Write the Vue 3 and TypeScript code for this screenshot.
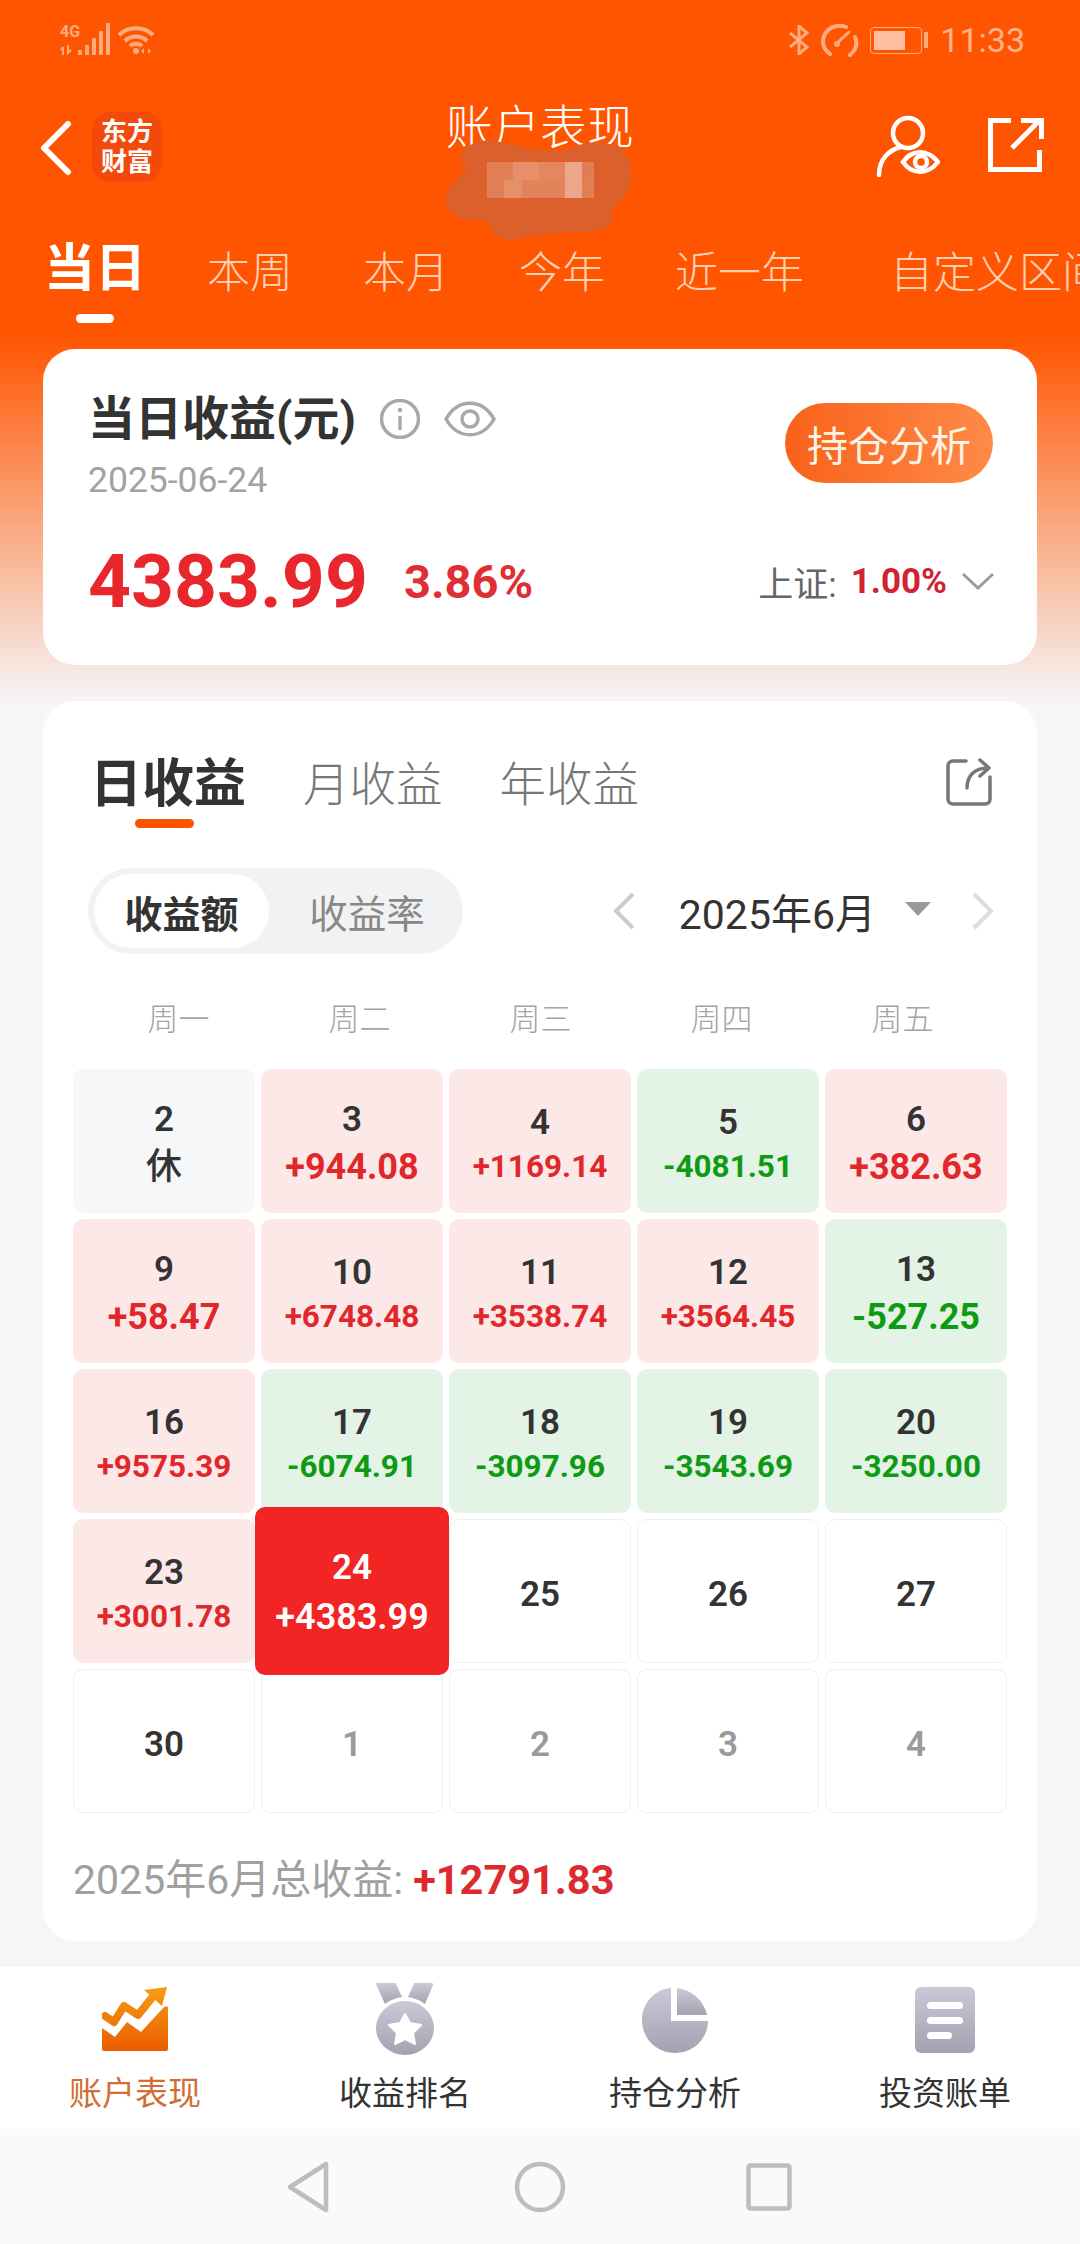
<script setup lang="ts">
type Kind = 'up' | 'down' | 'rest' | 'plain' | 'next' | 'today'
interface Cell {
  day: number
  value?: string
  kind: Kind
}

const rangeTabs = ['本周', '本月', '今年', '近一年']
const weekdays = ['周一', '周二', '周三', '周四', '周五']

const cells: Cell[] = [
  { day: 2, value: '休', kind: 'rest' },
  { day: 3, value: '+944.08', kind: 'up' },
  { day: 4, value: '+1169.14', kind: 'up' },
  { day: 5, value: '-4081.51', kind: 'down' },
  { day: 6, value: '+382.63', kind: 'up' },
  { day: 9, value: '+58.47', kind: 'up' },
  { day: 10, value: '+6748.48', kind: 'up' },
  { day: 11, value: '+3538.74', kind: 'up' },
  { day: 12, value: '+3564.45', kind: 'up' },
  { day: 13, value: '-527.25', kind: 'down' },
  { day: 16, value: '+9575.39', kind: 'up' },
  { day: 17, value: '-6074.91', kind: 'down' },
  { day: 18, value: '-3097.96', kind: 'down' },
  { day: 19, value: '-3543.69', kind: 'down' },
  { day: 20, value: '-3250.00', kind: 'down' },
  { day: 23, value: '+3001.78', kind: 'up' },
  { day: 24, value: '+4383.99', kind: 'today' },
  { day: 25, kind: 'plain' },
  { day: 26, kind: 'plain' },
  { day: 27, kind: 'plain' },
  { day: 30, kind: 'plain' },
  { day: 1, kind: 'next' },
  { day: 2, kind: 'next' },
  { day: 3, kind: 'next' },
  { day: 4, kind: 'next' },
]

// Eight-character amounts are set a little smaller so they stay inside the cell.
function isLong(cell: Cell): boolean {
  return cell.kind !== 'today' && (cell.value?.length ?? 0) >= 8
}

const mosaic = [
  { x: 487, y: 162, w: 26, h: 18, o: 0.2 },
  { x: 513, y: 162, w: 26, h: 18, o: 0.3 },
  { x: 539, y: 162, w: 26, h: 18, o: 0.24 },
  { x: 565, y: 162, w: 17, h: 18, o: 0.45 },
  { x: 582, y: 162, w: 12, h: 18, o: 0.18 },
  { x: 487, y: 180, w: 17, h: 18, o: 0.2 },
  { x: 504, y: 180, w: 18, h: 18, o: 0.3 },
  { x: 522, y: 180, w: 43, h: 18, o: 0.22 },
  { x: 565, y: 180, w: 17, h: 18, o: 0.45 },
  { x: 582, y: 180, w: 12, h: 18, o: 0.2 },
]
</script>

<template>
  <div class="page">
    <div class="status">
      <div class="status-side">
        <svg class="net" width="50" height="34" viewBox="0 0 50 34">
          <text x="0" y="14" class="net-label">4G</text>
          <path d="M3 24v8M1 27l2-3M8 22v8l3-3" class="net-arrow" />
          <rect x="18" y="27" width="4" height="5" rx="1" class="net-fill" />
          <rect x="25" y="22" width="4" height="10" rx="1" class="net-fill" />
          <rect x="32" y="15" width="4" height="17" rx="1" class="net-fill" />
          <rect x="39" y="8" width="4" height="24" rx="1" class="net-fill" />
          <rect x="46" y="0" width="4" height="32" rx="1" class="net-fill" />
        </svg>
        <svg class="wifi" width="38" height="30" viewBox="0 0 38 30">
          <path d="M1 10C10 1 26 1 35 10M7 16c6-6 16-6 22 0M12 21c3-3 9-3 12 0" />
          <circle cx="18" cy="26" r="3" />
          <path d="M26 23v6l-3-3zM30 23v6l3-3z" class="wifi-fill" />
        </svg>
      </div>
      <div class="status-side right">
        <svg class="bt" width="22" height="30" viewBox="0 0 22 30">
          <path d="M2 8l17 14-8 7V1l8 7L2 22" />
        </svg>
        <svg class="gauge" width="38" height="34" viewBox="0 0 38 34">
          <path d="M9 31C2 26 0 18 4 11 8 4 17 1 25 4" />
          <path d="M34 14c3 7 1 13-5 18" />
          <path d="M15 21L28 9" class="gauge-hand" />
          <circle cx="16" cy="21" r="3" class="wifi-fill" />
        </svg>
        <div class="battery">
          <div class="battery-body"><div class="battery-level"></div></div>
          <div class="battery-nub"></div>
        </div>
        <span class="clock">11:33</span>
      </div>
    </div>

    <header class="appbar">
      <div class="appbar-left">
        <svg width="32" height="54" viewBox="0 0 32 54">
          <path d="M28 3L4 27l24 24" class="line-back" />
        </svg>
        <div class="logo"><span>东方</span><span>财富</span></div>
      </div>
      <div class="title">账户表现</div>
      <div class="appbar-right">
        <svg width="64" height="62" viewBox="0 0 64 62">
          <circle cx="32" cy="18" r="15" class="line-thin" />
          <path d="M3 60c0-16 10-25 22-28" class="line-thin" />
          <path d="M27 47c9-13 25-13 35 0-10 13-26 13-35 0z" class="line-thin" />
          <circle cx="45" cy="47" r="6" class="line-thin" />
        </svg>
        <svg width="60" height="60" viewBox="0 0 60 60">
          <path d="M26 5.500H5.500v49h49V35" class="line-box" />
          <path d="M27 33L54 6M36 5.500h20.500V24" class="line-box" />
        </svg>
      </div>
      <svg class="redaction" width="1080" height="260" viewBox="0 0 1080 260">
        <path d="M463 152C470 140 490 138 500 142 520 146 545 152 565 150 585 140 610 140 622 150 634 162 634 180 626 195 618 205 610 208 612 215 614 228 600 232 580 232 555 232 530 236 510 240 500 242 490 228 486 220 470 222 450 218 447 205 444 190 455 178 468 172 462 165 458 158 463 152z" fill="#dc602c" />
        <rect v-for="(m, i) in mosaic" :key="i" :x="m.x" :y="m.y" :width="m.w" :height="m.h" fill="#ffffff" :fill-opacity="m.o" />
      </svg>
    </header>

    <nav class="ranges">
      <div class="range-active">
        <span>当日</span>
        <i></i>
      </div>
      <span v-for="tab in rangeTabs" :key="tab" class="range">{{ tab }}</span>
      <span class="range range-custom">自定义区间</span>
    </nav>

    <section class="card summary">
      <div class="summary-top">
        <div>
          <div class="summary-title">
            <strong>当日收益(元)</strong>
            <svg width="40" height="40" viewBox="0 0 40 40">
              <circle cx="20" cy="20" r="18.5" class="line-grey" />
              <path d="M20 17v14" class="line-grey" />
              <circle cx="20" cy="11" r="2.2" fill="#a8a8a8" />
            </svg>
            <svg width="52" height="40" viewBox="0 0 52 40">
              <path d="M2 20C14 -1 38 -1 50 20 38 41 14 41 2 20z" class="line-grey" />
              <circle cx="26" cy="20" r="8" class="line-grey" />
            </svg>
          </div>
          <div class="summary-date">2025-06-24</div>
        </div>
        <button class="analyse" type="button">持仓分析</button>
      </div>
      <div class="summary-bottom">
        <div class="summary-amount">
          <span class="amount">4383.99</span>
          <span class="rate">3.86%</span>
        </div>
        <div class="index">
          <span class="index-name">上证:</span>
          <span class="index-rate">1.00%</span>
          <svg width="34" height="18" viewBox="0 0 34 18">
            <path d="M2 2l15 14L32 2" class="line-chev" />
          </svg>
        </div>
      </div>
    </section>

    <section class="card calendar">
      <div class="cal-tabs">
        <div class="cal-tab-active">
          <strong>日收益</strong>
          <i></i>
        </div>
        <span class="cal-tab">月收益</span>
        <span class="cal-tab">年收益</span>
        <svg class="cal-share" width="46" height="48" viewBox="0 0 46 48">
          <path d="M20 3H7C4 3 2 5 2 8v33c0 3 2 5 5 5h32c3 0 5-2 5-5V19" class="line-share" />
          <path d="M21 30c0-12 7-20 21-20M34 2l9 8-9 8" class="line-share" />
        </svg>
      </div>

      <div class="cal-controls">
        <div class="segment">
          <span class="segment-on">收益额</span>
          <span class="segment-off">收益率</span>
        </div>
        <div class="month">
          <svg width="24" height="38" viewBox="0 0 24 38">
            <path d="M21 2L4 19l17 17" class="line-prev" />
          </svg>
          <span class="month-label">2025年6月</span>
          <span class="month-caret"></span>
          <svg width="24" height="38" viewBox="0 0 24 38">
            <path d="M3 2l17 17L3 36" class="line-next" />
          </svg>
        </div>
      </div>

      <div class="weekdays">
        <span v-for="day in weekdays" :key="day">{{ day }}</span>
      </div>

      <div class="grid">
        <div v-for="(cell, i) in cells" :key="i" class="cell" :class="cell.kind">
          <span class="cell-day">{{ cell.day }}</span>
          <span v-if="cell.value" class="cell-value" :class="{ long: isLong(cell) }">{{ cell.value }}</span>
        </div>
      </div>

      <div class="total">
        <span class="total-label">2025年6月总收益:</span>
        <strong class="total-value">+12791.83</strong>
      </div>
    </section>

    <div class="spacer"></div>

    <footer class="tabbar">
      <div class="tabbar-item active">
        <svg width="66" height="72" viewBox="0 -3 66 72">
          <defs>
            <linearGradient id="chartFill" gradientUnits="userSpaceOnUse" x1="0" y1="0" x2="0" y2="66">
              <stop offset="0" stop-color="#f6a012" />
              <stop offset="1" stop-color="#ea5a00" />
            </linearGradient>
            <linearGradient id="greyFill" x1="0" y1="0" x2="0" y2="1">
              <stop offset="0" stop-color="#c9c9d8" />
              <stop offset="1" stop-color="#a2a2b0" />
            </linearGradient>
          </defs>
          <path d="M0 42l13 9 12-15 14 10 23-25c2-1 4-1 4 1v41c0 1-1 2-2 2H2c-1 0-2-1-2-2z" fill="url(#chartFill)" />
          <path d="M3 30l9 6 10-16 14 9 17-21" fill="none" stroke="url(#chartFill)" stroke-width="8" stroke-linejoin="round" stroke-linecap="round" />
          <path d="M42 4L65 1 60 20z" fill="url(#chartFill)" />
        </svg>
        <span>账户表现</span>
      </div>
      <div class="tabbar-item">
        <svg width="60" height="72" viewBox="0 0 60 72">
          <path d="M1 1c0-1 1-1 2-1h16c1 0 1 0 2 1l6 13c-6 1-12 3-17 7zM40 0h16c2 0 3 1 2 2l-8 19c-5-4-11-6-17-7l6-13c0-1 0-1 1-1z" fill="url(#greyFill)" />
          <ellipse cx="30" cy="45" rx="29" ry="27" fill="url(#greyFill)" />
          <path d="M30 31l5 9 11 2-8 8 2 11-10-5-10 5 2-11-8-8 11-2z" fill="#fff" stroke="#fff" stroke-width="2" stroke-linejoin="round" />
        </svg>
        <span>收益排名</span>
      </div>
      <div class="tabbar-item">
        <svg width="68" height="72" viewBox="0 -3 68 72">
          <path d="M30 2C14 3 1 17 1 34c0 18 14 33 33 33s33-15 33-32H30z" fill="url(#greyFill)" />
          <path d="M36 2c15 2 27 13 30 27H36z" fill="url(#greyFill)" />
        </svg>
        <span>持仓分析</span>
      </div>
      <div class="tabbar-item">
        <svg width="62" height="72" viewBox="0 -3 62 72">
          <rect x="1" y="1" width="60" height="66" rx="6" fill="url(#greyFill)" />
          <rect x="13" y="16" width="36" height="7" rx="3.5" fill="#fff" />
          <rect x="13" y="31" width="36" height="7" rx="3.5" fill="#fff" />
          <rect x="13" y="46" width="25" height="7" rx="3.5" fill="#fff" />
        </svg>
        <span>投资账单</span>
      </div>
    </footer>

    <div class="sysnav">
      <svg width="42" height="52" viewBox="0 0 42 52">
        <path d="M39 3v46L3 26z" class="line-sys" />
      </svg>
      <svg width="52" height="52" viewBox="0 0 52 52">
        <circle cx="26" cy="26" r="23" class="line-sys" />
      </svg>
      <svg class="sys-recent" width="46" height="48" viewBox="0 0 46 48">
        <rect x="2.5" y="2.5" width="41" height="43" rx="2" class="line-sys" />
      </svg>
    </div>
  </div>
</template>

<style scoped>
.page {
  width: 1080px;
  height: 2244px;
  overflow: hidden;
  display: flex;
  flex-direction: column;
  background: linear-gradient(180deg, #ff5500 0, #ff5500 335px, #f5f6f8 705px);
  font-family: Roboto, "Noto Sans CJK SC", sans-serif;
  color: #333;
}
svg { display: block; flex: none; }

/* status bar */
.status {
  height: 84px;
  flex: none;
  display: flex;
  justify-content: space-between;
  align-items: center;
  padding: 0 55px 4px 60px;
  box-sizing: border-box;
}
.status-side { display: flex; align-items: center; gap: 8px; }
.status-side.right { gap: 11px; }
.net-label { font: 700 16px "Roboto", sans-serif; fill: #ffab80; }
.net-arrow { fill: none; stroke: #ffab80; stroke-width: 2; }
.net-fill { fill: #ffab80; }
.wifi path { fill: none; stroke: #ffab80; stroke-width: 4; }
.wifi circle { fill: #ffab80; }
.wifi .wifi-fill, .gauge .wifi-fill { fill: #ffab80; stroke: none; }
.bt path { fill: none; stroke: #ffab80; stroke-width: 3; }
.gauge path { fill: none; stroke: #ffab80; stroke-width: 4; stroke-linecap: round; }
.gauge .gauge-hand { stroke-width: 3; }
.battery { display: flex; align-items: center; gap: 2px; }
.battery-body {
  width: 52px;
  height: 27px;
  border: 1.5px solid #ffab80;
  border-radius: 4px;
  padding: 3px;
  box-sizing: border-box;
}
.battery-level { width: 31px; height: 100%; background: #ffbfa0; }
.battery-nub { width: 4px; height: 16px; background: #ffab80; border-radius: 1px; }
.clock { font-size: 34px; color: #ffb48e; margin-left: 1px; }

/* app bar */
.appbar {
  position: relative;
  height: 126px;
  flex: none;
  display: flex;
  justify-content: space-between;
  padding: 28px 35px 0 40px;
  box-sizing: border-box;
}
.appbar-left { display: flex; align-items: flex-start; gap: 20px; }
.appbar-left > svg { margin-top: 9px; }
.logo {
  width: 70px;
  height: 70px;
  background: #f34a0c;
  border-radius: 18px;
  display: flex;
  flex-direction: column;
  align-items: center;
  justify-content: center;
  color: #fff;
  font-size: 26px;
  font-weight: 700;
  line-height: 30px;
}
.title {
  position: absolute;
  left: 0;
  right: 0;
  top: 12px;
  text-align: center;
  font-size: 47px;
  line-height: 64px;
  color: #fff;
  font-weight: 300;
  z-index: 1;
}
.appbar-right { display: flex; align-items: flex-start; gap: 45px; padding-top: 3px; }
.redaction { position: absolute; left: 0; top: -84px; z-index: 2; pointer-events: none; }
.line-back { fill: none; stroke: #fff; stroke-width: 6; stroke-linecap: round; stroke-linejoin: round; }
.line-box { fill: none; stroke: #fff; stroke-width: 5; }
.line-thin { fill: none; stroke: #fff; stroke-width: 4.5; stroke-linecap: round; }

/* range tabs */
.ranges {
  height: 139px;
  flex: none;
  display: flex;
  align-items: flex-start;
  gap: 70px;
  padding: 26px 0 0 44px;
  box-sizing: border-box;
  overflow: hidden;
  position: relative;
  z-index: 3;
}
.range-active {
  display: flex;
  flex-direction: column;
  align-items: center;
  width: 102px;
  margin-right: -9px;
  flex: none;
  color: #fff;
  font-size: 51px;
  line-height: 65px;
  font-weight: 700;
}
.range-active i {
  width: 38px;
  height: 9px;
  margin-top: 13px;
  border-radius: 5px;
  background: #fff;
}
.range {
  flex: none;
  font-size: 43px;
  line-height: 56px;
  margin-top: 9px;
  color: #ffd0b4;
  font-weight: 300;
}
.range-custom { margin-left: 16px; }

/* shared card */
.card {
  flex: none;
  margin: 0 43px;
  background: #fff;
  border-radius: 32px;
  box-sizing: border-box;
}

/* summary card */
.summary { height: 316px; padding: 42px 44px 0 45px; }
.summary-top { display: flex; justify-content: space-between; align-items: flex-start; }
.summary-title { display: flex; align-items: center; gap: 24px; height: 56px; }
.summary-title strong { font-size: 47px; font-weight: 700; color: #333; line-height: 56px; }
.summary-date { font-size: 35.500px; line-height: 44px; margin-top: 11px; color: #a2a2a2; font-weight: 400; }
.analyse {
  width: 208px;
  height: 80px;
  margin-top: 12px;
  border: 0;
  border-radius: 40px;
  background: linear-gradient(90deg, #f8621a, #ff8a48);
  color: #fff3e6;
  font: 400 41px Roboto, "Noto Sans CJK SC", sans-serif;
  padding: 0;
}
.summary-bottom {
  display: flex;
  justify-content: space-between;
  align-items: center;
  margin-top: 34px;
}
.summary-amount { display: flex; align-items: center; gap: 36px; }
.amount { font-size: 75px; font-weight: 700; line-height: 90px; color: #e8262c; }
.rate { font-size: 47px; font-weight: 700; color: #df2f35; }
.index { display: flex; align-items: center; gap: 14px; margin-right: -2px; }
.index-name { font-size: 35px; color: #666; font-weight: 400; }
.index-rate { font-size: 35px; font-weight: 700; color: #d0232f; }
.line-grey { fill: none; stroke: #a8a8a8; stroke-width: 3.5; }
.line-chev { fill: none; stroke: #9c9c9c; stroke-width: 3; }

/* calendar card */
.calendar {
  height: 1240px;
  margin-top: 36px;
  padding: 0 30px;
}
.cal-tabs {
  display: flex;
  align-items: flex-start;
  padding: 54px 15px 0 17px;
  gap: 57px;
  height: 167px;
  box-sizing: border-box;
}
.cal-tab-active { display: flex; flex-direction: column; align-items: center; }
.cal-tab-active strong { font-size: 52px; font-weight: 700; line-height: 60px; color: #333; }
.cal-tab-active i {
  width: 59px;
  height: 9px;
  margin: 4px 8px 0 0;
  border-radius: 5px;
  background: #fa5400;
}
.cal-tab { font-size: 46.500px; line-height: 60px; color: #777; font-weight: 300; }
.cal-share { margin-left: auto; margin-top: 3px; }
.line-share { fill: none; stroke: #777; stroke-width: 3.5; stroke-linecap: round; stroke-linejoin: round; }

.cal-controls {
  display: flex;
  justify-content: space-between;
  align-items: center;
  padding: 0 12px 0 15px;
}
.segment {
  display: flex;
  align-items: center;
  width: 375px;
  height: 86px;
  padding: 6px;
  box-sizing: border-box;
  background: #f1f2f4;
  border-radius: 43px;
}
.segment-on {
  width: 175px;
  height: 74px;
  background: #fff;
  border-radius: 37px;
  font-size: 38px;
  font-weight: 700;
  display: flex;
  align-items: center;
  justify-content: center;
  color: #333;
}
.segment-off { flex: 1; text-align: center; font-size: 38.500px; color: #888; font-weight: 400; padding-left: 8px; }
.month { display: flex; align-items: center; }
.month-label { font-size: 41px; color: #333; margin: 0 29px 0 43px; }
.month-caret {
  width: 0;
  height: 0;
  border-left: 13px solid transparent;
  border-right: 13px solid transparent;
  border-top: 14px solid #999;
  margin-right: 40px;
  margin-top: -4px;
}
.line-prev { fill: none; stroke: #ccc; stroke-width: 4; }
.line-next { fill: none; stroke: #ddd; stroke-width: 4; }

.weekdays {
  display: grid;
  grid-template-columns: repeat(5, 181px);
  margin: 29px 0 0 15px;
  height: 66px;
  align-items: center;
  justify-items: center;
  font-size: 31px;
  font-weight: 300;
  color: #a4a4a4;
}

.grid {
  display: grid;
  grid-template-columns: repeat(5, 182px);
  grid-auto-rows: 144px;
  gap: 6px;
  margin-top: 20px;
}
.cell {
  border-radius: 10px;
  box-sizing: border-box;
  display: flex;
  flex-direction: column;
  align-items: center;
  justify-content: center;
  border: 1px solid transparent;
  padding-top: 8px;
}
.up { background: #fde8e8; }
.down { background: #e3f3e5; }
.rest { background: #f6f7f9; }
.plain, .next { background: #fff; border-color: #efefef; }
.today {
  background: #f22424;
  margin: -12px -6px;
  position: relative;
  z-index: 1;
  border-radius: 10px;
  color: #fff;
}
.cell-day {
  font-size: 35px;
  font-weight: 600;
  line-height: 44px;
  color: #333;
}
.next .cell-day { color: #9a9a9a; }
.today .cell-day { color: #fff; }
.cell-value {
  font-size: 36px;
  font-weight: 700;
  line-height: 50px;
}
.cell-value.long { font-size: 31.500px; line-height: 44px; font-weight: 700; }
.up .cell-value { color: #e0282c; }
.down .cell-value { color: #0f9a14; }
.rest .cell-value { color: #333; font-size: 36px; font-weight: 500; }
.today .cell-value { color: #fff; font-size: 36px; line-height: 54px; font-weight: 600; }

.total {
  display: flex;
  align-items: baseline;
  gap: 10px;
  margin-top: 42px;
  font-size: 41px;
  line-height: 50px;
}
.total-label { color: #a0a0a0; font-weight: 400; }
.total-value { color: #dd2a2e; font-weight: 700; font-size: 41.500px; }

.spacer { flex: 1; }

/* bottom tab bar */
.tabbar {
  height: 164px;
  flex: none;
  display: grid;
  grid-template-columns: repeat(4, 270px);
  background: #fff;
  border-top: 1px solid #eceef0;
  box-sizing: border-box;
}
.tabbar-item {
  display: flex;
  flex-direction: column;
  align-items: center;
  height: 164px;
  font-size: 33px;
  font-weight: 400;
  color: #333;
  position: relative;
  padding-top: 17px;
  box-sizing: border-box;
}
.tabbar-item span { position: absolute; left: 0; right: 0; top: 104px; text-align: center; line-height: 48px; }
.tabbar-item.active span { color: #cf6f36; }

/* system navigation */
.sysnav {
  height: 115px;
  flex: none;
  display: flex;
  align-items: center;
  gap: 185px;
  background: #fafafa;
  padding-left: 287px;
}
.sys-recent { margin-left: -5px; }
.line-sys { fill: none; stroke: #bdbdbd; stroke-width: 4.5; stroke-linejoin: round; }
</style>
